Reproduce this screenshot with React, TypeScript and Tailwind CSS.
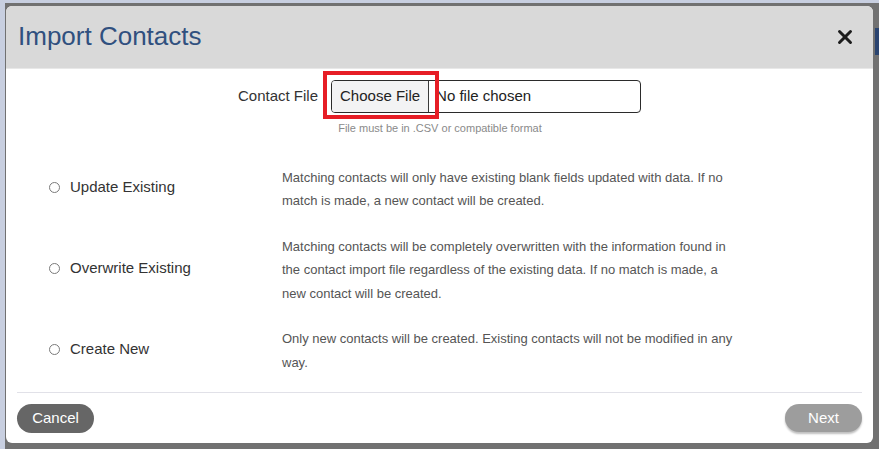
import { X } from "lucide-react"

const options = [
  {
    label: "Update Existing",
    text: "Matching contacts will only have existing blank fields updated with data. If no match is made, a new contact will be created.",
  },
  {
    label: "Overwrite Existing",
    text: "Matching contacts will be completely overwritten with the information found in the contact import file regardless of the existing data. If no match is made, a new contact will be created.",
  },
  {
    label: "Create New",
    text: "Only new contacts will be created. Existing contacts will not be modified in any way.",
  },
]

export default function App() {
  return (
    <div className="relative w-[879px] h-[449px] overflow-hidden bg-[#c8cfe0] pt-[3px] pl-[5px] font-['Liberation_Sans',Arial,sans-serif]">
      <div className="h-full bg-[#717171] pt-[3px] pl-[1px]">
        <div className="absolute right-0 top-[28px] w-[4px] h-[27px] bg-[#2a4470]" />
        <div className="relative flex flex-col w-[867px] h-[437px] bg-white rounded-[6px] overflow-hidden">
          {/* header */}
          <div className="flex items-center justify-between h-[63px] bg-[#d9d9d9] border-b border-[#e8e8e8] pl-[12px] pr-[17px]">
            <h1 className="text-[26px] leading-none text-[#30507f] pb-[3px]">Import Contacts</h1>
            <X className="w-[22px] h-[22px] text-[#1c1c1c]" strokeWidth={3.2} />
          </div>

          {/* file field */}
          <div className="flex items-center justify-center mt-[11px]">
            <span className="text-[15px] text-[#333] mr-[13px]">Contact File</span>
            <div className="relative">
              <div className="flex items-center w-[310px] h-[33px] border border-[#2b2b2b] rounded-[4px] overflow-hidden">
                <span className="flex items-center h-full px-[8px] bg-[#f3f3f4] border-r border-[#3a3a3a] text-[15px] text-[#222]">
                  Choose File
                </span>
                <span className="pl-[7px] text-[15px] text-[#222]">No file chosen</span>
              </div>
              <div className="absolute left-[-8px] top-[-9px] w-[116px] h-[48px] border-[4px] border-[#e61d25]" />
            </div>
          </div>
          <p className="mt-[7px] text-center text-[11px] text-[#8a8a8a] pl-[1px]">
            File must be in .CSV or compatible format
          </p>

          {/* options */}
          <div className="flex flex-col gap-[22px] mt-[29px] pl-[43px]">
            {options.map((o) => (
              <div key={o.label} className="flex items-center">
                <label className="flex items-center w-[233px] text-[15px] text-[#333] pb-[3px]">
                  <span className="w-[11px] h-[11px] rounded-full border border-[#7a7a7a] mr-[10px]" />
                  {o.label}
                </label>
                <p className="w-[460px] text-[13px] leading-[23.5px] text-[#555]">{o.text}</p>
              </div>
            ))}
          </div>

          {/* footer */}
          <div className="mt-auto mx-[11px] border-t border-[#e1e1e8] pt-[11px] pb-[10px] flex justify-between">
            <button className="w-[77px] h-[29px] rounded-full bg-[#666] text-white text-[15px]">Cancel</button>
            <button className="w-[77px] h-[28px] rounded-full bg-[#9d9d9d] text-white text-[15px] shadow-[0_2px_2px_rgba(0,0,0,0.25)]">
              Next
            </button>
          </div>
        </div>
      </div>
    </div>
  )
}
